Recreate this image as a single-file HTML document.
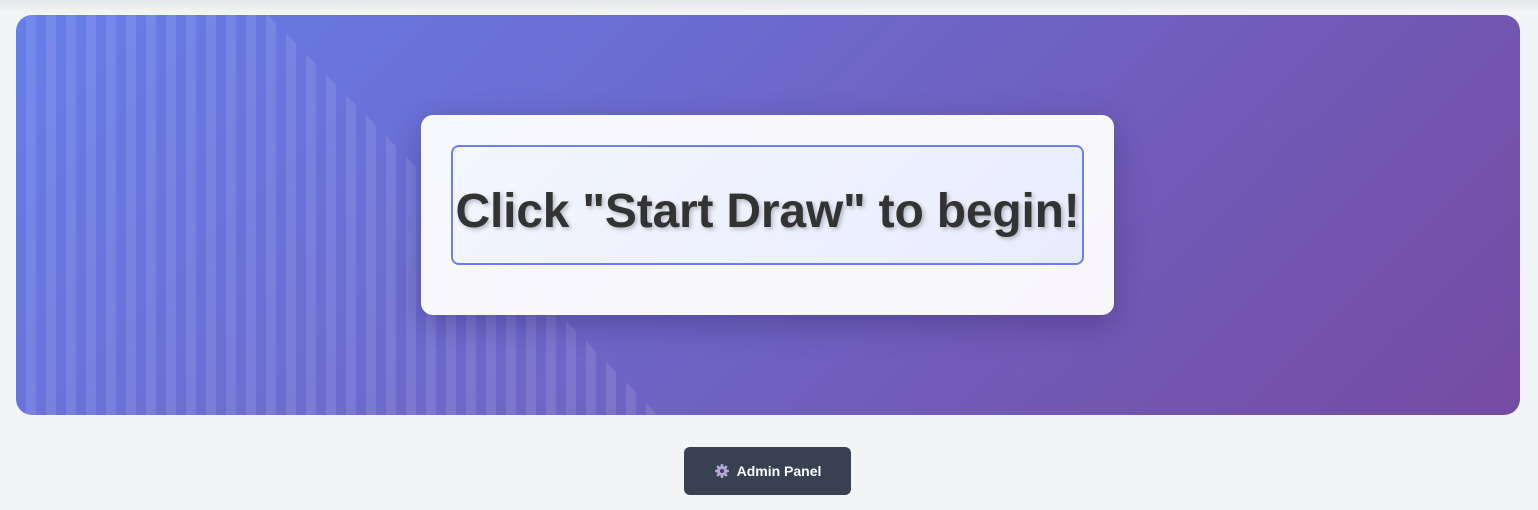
<!DOCTYPE html>
<html><head><style>
html,body{margin:0;padding:0;width:1538px;height:510px;background:#f3f4f6;overflow:hidden;font-family:"Liberation Sans",sans-serif;}
.topshadow{position:absolute;left:0;top:0;width:1538px;height:12px;background:linear-gradient(#e6e7e9,#f3f4f6);}
.hero{position:absolute;left:16px;top:15px;width:1504px;height:400px;border-radius:16px;overflow:hidden;background:linear-gradient(135deg,#667eea 0%,#764ba2 100%);}
.stripes{position:absolute;left:0;top:0;width:660px;height:400px;background:repeating-linear-gradient(90deg,rgba(255,255,255,0.1) 0 10px,rgba(255,255,255,0) 10px 20px);background-position:10px 0;clip-path:polygon(0 0,252px 0,642px 400px,0 400px);}
.card{position:absolute;left:405px;top:100px;width:693px;height:200px;border-radius:12px;background:rgba(255,255,255,0.95);box-shadow:0 10px 30px rgba(40,30,90,0.35);}
.box{position:absolute;left:30px;top:30px;width:629px;height:116px;border:2px solid #6a80ea;border-radius:8px;background:linear-gradient(135deg,#f3f6ff,#e9ecfd);display:flex;align-items:center;justify-content:center;}
.box span{font-weight:bold;font-size:48px;color:#333;text-shadow:2px 2px 4px rgba(0,0,0,0.25);white-space:nowrap;padding-top:12px;letter-spacing:-0.2px;}
.btn{position:absolute;left:684px;top:447px;width:167px;height:48px;border-radius:6px;background:#374151;color:#fff;font-weight:bold;font-size:14px;display:flex;align-items:center;justify-content:center;gap:7px;}
</style></head><body>
<div class="topshadow"></div>
<div class="hero"><div class="stripes"></div>
<div class="card"><div class="box"><span>Click "Start Draw" to begin!</span></div></div></div>
<div class="btn"><svg width="16" height="16" viewBox="0 0 16 16"><g fill="#b5a7d6"><circle cx="8" cy="8" r="5"/><rect x="6.7" y="1" width="2.6" height="14" rx="0.8"/><rect x="6.7" y="1" width="2.6" height="14" rx="0.8" transform="rotate(45 8 8)"/><rect x="6.7" y="1" width="2.6" height="14" rx="0.8" transform="rotate(90 8 8)"/><rect x="6.7" y="1" width="2.6" height="14" rx="0.8" transform="rotate(135 8 8)"/></g><circle cx="8" cy="8" r="2" fill="#374151"/></svg>Admin Panel</div>
</body></html>
